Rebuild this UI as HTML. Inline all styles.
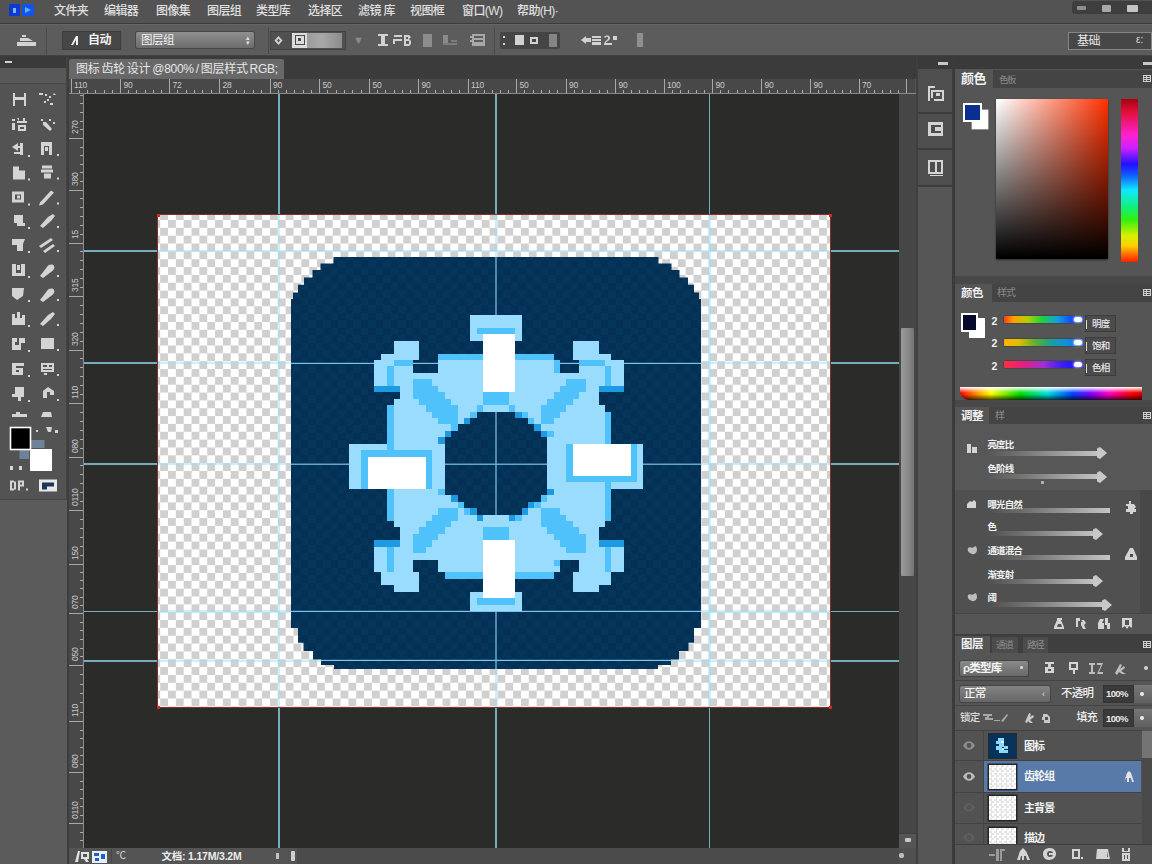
<!DOCTYPE html>
<html lang="zh">
<head>
<meta charset="utf-8">
<title>Photoshop</title>
<style>
html,body{margin:0;padding:0;}
body{width:1152px;height:864px;overflow:hidden;background:#545454;position:relative;
 font-family:"Liberation Sans","Noto Sans CJK SC",sans-serif;font-size:12px;color:#dcdcdc;}
.a{position:absolute;}
.t{position:absolute;white-space:nowrap;line-height:1;}
/* ---------- top bars ---------- */
#menubar{left:0;top:0;width:1152px;height:23px;background:#535353;border-bottom:1px solid #3c3c3c;}
#menubar .t{top:5px;font-size:12px;color:#e0e0e0;letter-spacing:-0.6px;font-weight:500;}
#optbar{left:0;top:24px;width:1152px;height:32px;background:#5c5c5c;border-top:1px solid #666;border-bottom:1px solid #424242;box-sizing:border-box;}
#strip{left:0;top:56px;width:1152px;height:23px;background:#3b3b3b;}
#tab{left:69px;top:59px;width:215px;height:20px;background:#686868;border-radius:2px 2px 0 0;}
#tab .t{left:7px;top:4px;font-size:12px;color:#e6e6e6;letter-spacing:-0.3px;word-spacing:-1px;}
/* ---------- toolbox ---------- */
#toolbox{left:0;top:57px;width:66px;height:443px;background:#535353;border-right:1px solid #444;}
#toolhead{left:0;top:57px;width:66px;height:11px;background:#3a3a3a;}
#toolbelow{left:0;top:499px;width:67px;height:365px;background:#5b5b5b;border-top:1px solid #474747;}
/* ---------- rulers / canvas ---------- */
#rulert{left:69px;top:79px;width:846px;height:15px;background:#484848;}
#rulerl{left:69px;top:94px;width:15px;height:754px;background:#484848;}
#canvas{left:84px;top:94px;width:815px;height:754px;background:#2b2b29;overflow:hidden;}
#vscroll{left:899px;top:94px;width:17px;height:754px;background:#464646;}
#vthumb{left:901px;top:328px;width:13px;height:248px;background:linear-gradient(90deg,#9a9a9a,#8a8a8a 50%,#747474);border-radius:1px;}
#status{left:69px;top:848px;width:847px;height:16px;background:#555;}
#doc{left:158px;top:215px;width:672px;height:492px;background-color:#fff;
 background-image:conic-gradient(#d0d0d0 25%,#fff 0 50%,#d0d0d0 0 75%,#fff 0);background-size:15.7px 15.7px;background-position:10px -2.85px;outline:1px solid #8a2e26;}
.gv{position:absolute;width:1.6px;background:#5cc0e2;top:94px;height:754px;}
.gh{position:absolute;height:1.6px;background:#5cc0e2;left:84px;width:815px;}
/* ---------- right side ---------- */
#rgap{left:916px;top:56px;width:236px;height:808px;background:#3f3f3f;}
#istrip{left:918px;top:69px;width:33px;height:795px;background:#535353;}
#rpanel{left:955px;top:69px;width:197px;height:795px;background:#555;}
.tabbar{position:absolute;left:955px;width:197px;height:18px;background:#444;}
.tabact{position:absolute;top:0;left:0;height:18px;background:#555;}
.rl{font-size:8.5px;color:#c8c8c8;letter-spacing:-0.2px;}
</style>
</head>
<body>
<!-- top bars -->
<div id="menubar" class="a">
 <span class="t" style="left:8.5px;top:3.5px;width:11.5px;height:12.5px;background:#0c3ad2;border-radius:1px"></span><span class="t" style="left:13px;top:8px;width:3px;height:5px;background:#7fb4ff"></span>
 <span class="t" style="left:22px;top:3.5px;width:12px;height:12.5px;background:#1552e8;border-radius:1px"></span><span class="t" style="left:25px;top:7px;border-left:6px solid #58b0ff;border-top:3px solid transparent;border-bottom:3px solid transparent"></span>
 <span class="t" style="left:54px">文件夹</span>
 <span class="t" style="left:104px">编辑器</span>
 <span class="t" style="left:156px">图像集</span>
 <span class="t" style="left:207px">图层组</span>
 <span class="t" style="left:256px">类型库</span>
 <span class="t" style="left:308px">选择区</span>
 <span class="t" style="left:358px">滤镜 库</span>
 <span class="t" style="left:410px">视图框</span>
 <span class="t" style="left:462px">窗口(W)</span>
 <span class="t" style="left:517px">帮助(H)·</span>
</div>
<div id="optbar" class="a"></div>
<div id="strip" class="a"></div>
<div id="tab" class="a"><span class="t">图标 齿轮 设计 @800% / 图层样式 RGB;</span></div>

<!-- toolbox -->
<div id="toolbox" class="a"></div>
<div id="toolhead" class="a"></div>
<div id="toolbelow" class="a"></div>
<!--TB-S--><svg class="a" style="left:0;top:57px" width="66" height="443" viewBox="0 0 66 443"><g fill="#d4d4d4"><path d="M13 36h2v4h9v-4h2v13h-2v-6h-9v6h-2z"/><path d="M39 36h4v2h-4zM45 37h2v2h-2zM49 39h2v2h-2zM47 42h2v2h-2zM44 44h2v2h-2zM50 46h3v2h-3zM54 36l2 2h-3z"/><path d="M12 62h3v2h-3zM12 66h3v7h-3zM17 61h2v3h4v-3h2v3h2v2h-10v-2h2zM18 68h8v6h-8zM20 70v2h4v-2z" fill-rule="evenodd"/><path d="M41 62h2v2h-2zM43 65l3 0 6 7-2 2-7-6zM49 62h2v2h-2zM53 65h2v2h-2z"/><path d="M12 90l6-4v3h3v2h-3v3zM20 86h3v12h-3zM14 95h6v2h-6z"/><path d="M41 85h11v13H41zM44 89v9h5v-9z" fill-rule="evenodd"/><rect x="45" y="90" width="3" height="4"/><rect x="28" y="98" width="2" height="2"/><rect x="57" y="97" width="2" height="2"/><path d="M13 109.5h6v4h6v9H13z"/><path d="M42 108.5h10v3h-10zM41 112.5h12v3h-12zM44 116.5h7v5h-7z"/><rect x="28" y="121.5" width="2" height="2"/><rect x="57" y="120.5" width="2" height="2"/><path d="M12 134.5h12v11H12zM15 137.5v5h6v-5z" fill-rule="evenodd"/><rect x="17" y="138.5" width="3" height="3"/><path d="M40 145.5l11-12 3 2-11 12-4 1z"/><rect x="28" y="146.5" width="2" height="2"/><rect x="57" y="145.5" width="2" height="2"/><path d="M14 158h9v8h2v3H17v-3h-3z"/><path d="M40 169l8-9 5-3 2 2-4 5-8 7z"/><rect x="28" y="170" width="2" height="2"/><rect x="57" y="169" width="2" height="2"/><path d="M12 182h13l-2 5v7h-6v-6h-5z"/><path d="M39 189l12-8 2 2-12 8zM43 194l10-7 2 2-10 7z"/><rect x="28" y="194" width="2" height="2"/><rect x="57" y="193" width="2" height="2"/><path d="M12 207h4v9h5v-9h4v12H12z"/><rect x="17" y="208" width="3" height="5"/><path d="M40 219l7-9c2-3 6-3 7-1s0 4-3 6l-8 6z"/><rect x="28" y="219" width="2" height="2"/><rect x="57" y="218" width="2" height="2"/><path d="M12 231h12l-1 8-6 4-5-4z"/><path d="M40 243l7-9c2-3 6-3 7-1s0 4-3 6l-8 6z"/><rect x="28" y="243" width="2" height="2"/><rect x="57" y="242" width="2" height="2"/><path d="M12 257h3v4h2v-6h3v6h2v-3h3v10H12z"/><path d="M40 267l8-9 5-3 2 2-4 5-8 7z"/><rect x="28" y="268" width="2" height="2"/><rect x="57" y="267" width="2" height="2"/><path d="M12 281h5v4h-2v3h4v-7h6v5h-4v7H12z"/><path d="M41 281h13v11H41z"/><rect x="28" y="293" width="2" height="2"/><rect x="57" y="292" width="2" height="2"/><path d="M12 306h12v3h-8v2h7v7H12zM16 313v2h3v-2z" fill-rule="evenodd"/><path d="M41 306h13v9H41zM43 308v2h4v-2zM49 308v2h3v-2zM43 312v1h9v-1z" fill-rule="evenodd"/><path d="M44 316h3v2h-3z"/><rect x="28" y="318" width="2" height="2"/><rect x="57" y="317" width="2" height="2"/><path d="M15 330h9v10h-3v4h-3v-4h-6v-3h3z"/><path d="M43 334l5-4 6 4v4h-4v-3h-3v6h-4z"/><rect x="28" y="343" width="2" height="2"/><rect x="57" y="342" width="2" height="2"/><path d="M12 357h4v-2h4v2h7v3H12zM41 360l2-5h8l1 5z"/><path d="M46 370h6l-1 5h-3zM55 373h3v3h-3zM36 373h2v2h-2z"/><rect x="10" y="409" width="3" height="4"/><rect x="19" y="409" width="3" height="4"/></g><rect x="19.500" y="383" width="25" height="19" fill="#6e8298"/><rect x="29.500" y="391.5" width="23" height="23" fill="#fff" stroke="#555" stroke-width="1"/><rect x="10.500" y="370.5" width="20" height="22" fill="#000" stroke="#fff" stroke-width="1.6"/><g fill="#d4d4d4"><path d="M10 423.5h4v1h2v8h-2v1h-4zM12 425.5v6h2v-6zM18 423.5h6v6h-4v4h-2zM20 425.5v2h2v-2z" fill-rule="evenodd"/><rect x="26" y="431.5" width="2" height="2"/></g><rect x="39" y="422.5" width="18" height="12" fill="#e8e8e8"/><path d="M42 425.5h12v4h-7v3h-5z" fill="#1c3558"/></svg><!--TB-E-->

<!--OPT-S--><div class="a" style="left:1072px;top:1px;width:80px;height:13px;background:#3e3e3e;border-radius:3px 0 0 3px"></div>
<div class="a" style="left:1077px;top:6px;width:9px;height:4px;background:#8d8d8d;border-radius:1px"></div>
<div class="a" style="left:1102px;top:5px;width:9px;height:7px;background:#a8a8a8;border-radius:1px"></div>
<div class="a" style="left:1127px;top:5px;width:11px;height:7px;background:#c4c4c4;border-radius:1px"></div>
<svg class="a" style="left:16px;top:33px" width="22" height="14" viewBox="0 0 22 14"><path d="M1 9h19v4H1zM4 5h8l5 3H4zM6 2h4v2H6z" fill="#d2d2d2"/></svg>
<div class="a" style="left:46px;top:27px;width:1px;height:27px;background:#4a4a4a"></div>
<div class="a" style="left:62px;top:31px;width:59px;height:19px;background:#474747;border:1px solid #3c3c3c;box-sizing:border-box"></div>
<svg class="a" style="left:70px;top:35px" width="10" height="11" viewBox="0 0 10 11"><path d="M1 10L6 1h2v9H6V5L3 10z" fill="#eee"/></svg>
<span class="t" style="left:88px;top:34px;font-size:12px;color:#f0f0f0;font-weight:bold;letter-spacing:-0.5px">自动</span>
<div class="a" style="left:136px;top:32px;width:118px;height:16px;background:linear-gradient(#8f8f8f,#6c6c6c);border-radius:2px;box-shadow:0 0 0 1px #474747"></div>
<span class="t" style="left:141px;top:35px;font-size:11.5px;color:#f2f2f2;letter-spacing:-0.5px">图层组</span>
<span class="t" style="left:246px;top:35px;font-size:7px;color:#e0e0e0;line-height:5px">▴<br>▾</span>
<div class="a" style="left:268px;top:27px;width:1px;height:27px;background:#4a4a4a"></div>
<div class="a" style="left:270px;top:31px;width:76px;height:19px;background:#505050;border:1px solid #424242;box-sizing:border-box"></div>
<svg class="a" style="left:273px;top:35px" width="11" height="11" viewBox="0 0 11 11"><path d="M5.5 1l4 4.500-4 4.500-4-4.500zM4 5.500l1.500 1.800L7 5.500 5.500 3.700z" fill="#d2d2d2" fill-rule="evenodd"/></svg>
<div class="a" style="left:292px;top:33px;width:50px;height:15px;background:linear-gradient(90deg,#dcdcdc 0,#dcdcdc 30%,#9d9d9d 31%,#a8a8a8 60%,#8c8c8c 100%)"></div>
<div class="a" style="left:295px;top:35px;width:10px;height:10px;border:1.5px solid #4a4a4a;box-sizing:border-box"><div style="margin:2px;width:3px;height:3px;background:#4a4a4a"></div></div>
<span class="t" style="left:353px;top:35px;font-size:11px;color:#8a8a8a">▼</span>
<svg class="a" style="left:377px;top:33px" width="110" height="15" viewBox="0 0 110 15"><g fill="#d2d2d2"><path d="M1 1h10v2H8v8h3v2H1v-2h3V3H1z"/><path d="M17 2h8v2h-8zM16 6h9v2h-7v3h-2zM27 2h5l2 2-2 2 2 2v3l-2 2h-5zM29 4v2h2V4zM29 8v3h3V8z" fill-rule="evenodd"/><rect x="46" y="1" width="9" height="13" fill="#8c8c8c"/><path d="M66 2h5v8h-5z" fill="#8a8a8a"/><path d="M66 10h14v2H66zM74 7h6v2h-6z" fill="#7c7c7c"/><path d="M95 1h13v12H95zM93 3h2v2h-2zM93 7h2v2h-2z" fill="#a8a8a8"/><path d="M97 3h9v2h-9zM97 7h9v2h-9z" fill="#5b5b5b"/></g></svg>
<div class="a" style="left:494px;top:27px;width:1px;height:27px;background:#4a4a4a"></div>
<div class="a" style="left:500px;top:32px;width:60px;height:17px;background:#454545;border-radius:2px"></div>
<svg class="a" style="left:500px;top:32px" width="60" height="17" viewBox="0 0 60 17"><g fill="#d2d2d2"><rect x="3" y="4" width="2" height="2"/><rect x="3" y="11" width="2" height="2"/><rect x="15" y="3" width="9" height="10"/><path d="M30 5h8v7h-8zM32 7v3h4V7z" fill-rule="evenodd"/><rect x="49" y="2" width="8" height="13" fill="#858585"/></g></svg>
<svg class="a" style="left:580px;top:33px" width="40" height="15" viewBox="0 0 40 15"><g fill="#d2d2d2"><path d="M1 7l5-4v2h5v4H6v2z"/><path d="M12 3h9v2h-9zM12 6h9v2h-9zM12 9h9v3h-9z"/><path d="M24 4c2-2 6-2 6 1s-4 3-4 5h6v2h-8c0-4 4-5 4-7s-2-1-3 0zM33 3h4v4h-4z"/></g></svg>
<div class="a" style="left:637px;top:33px;width:6px;height:14px;background:#8f8f8f"></div>
<div class="a" style="left:1068px;top:32px;width:84px;height:18px;background:#474747;border:1px solid #858585;box-sizing:border-box"></div>
<span class="t" style="left:1077px;top:35px;font-size:12px;color:#e6e6e6;letter-spacing:-0.5px">基础</span>
<span class="t" style="left:1136px;top:35px;font-size:10px;color:#ddd">ε:</span>
<div class="a" style="left:938px;top:62px;width:10px;height:3px;background:#c8c8c8;z-index:5"></div>
<div class="a" style="left:1143px;top:62px;width:9px;height:3px;background:#c8c8c8;z-index:5"></div>
<div class="a" style="left:5px;top:61px;width:7px;height:2px;background:#d0d0d0"></div>
<div class="a" style="left:0;top:68px;width:66px;height:15px;background:#585858;border-bottom:1px solid #474747"></div>
<div class="a" style="left:67px;top:57px;width:2px;height:807px;background:#3d3d3d"></div><!--OPT-E-->
<!-- canvas -->
<div id="rulert" class="a"></div>
<div id="rulerl" class="a"></div>
<!--RUL-S--><svg class="a" style="left:69px;top:79px" width="847" height="15" viewBox="0 0 847 15" shape-rendering="crispEdges"><rect x="1.5" y="0" width="1" height="15" fill="#a8a8a8"/><rect x="51.0" y="0" width="1" height="15" fill="#a8a8a8"/><rect x="100.0" y="0" width="1" height="15" fill="#a8a8a8"/><rect x="150.0" y="0" width="1" height="15" fill="#a8a8a8"/><rect x="200.5" y="0" width="1" height="15" fill="#a8a8a8"/><rect x="250.0" y="0" width="1" height="15" fill="#a8a8a8"/><rect x="300.0" y="0" width="1" height="15" fill="#a8a8a8"/><rect x="349.0" y="0" width="1" height="15" fill="#a8a8a8"/><rect x="398.5" y="0" width="1" height="15" fill="#a8a8a8"/><rect x="447.0" y="0" width="1" height="15" fill="#a8a8a8"/><rect x="496.5" y="0" width="1" height="15" fill="#a8a8a8"/><rect x="546.0" y="0" width="1" height="15" fill="#a8a8a8"/><rect x="594.5" y="0" width="1" height="15" fill="#a8a8a8"/><rect x="643.0" y="0" width="1" height="15" fill="#a8a8a8"/><rect x="692.0" y="0" width="1" height="15" fill="#a8a8a8"/><rect x="741.0" y="0" width="1" height="15" fill="#a8a8a8"/><rect x="789.5" y="0" width="1" height="15" fill="#a8a8a8"/><rect x="837.0" y="0" width="1" height="15" fill="#a8a8a8"/><path d="M9.8 11h1v4h-1zM18.0 11h1v4h-1zM26.2 11h1v4h-1zM34.5 11h1v4h-1zM42.8 11h1v4h-1zM59.2 11h1v4h-1zM67.3 11h1v4h-1zM75.5 11h1v4h-1zM83.7 11h1v4h-1zM91.8 11h1v4h-1zM108.3 11h1v4h-1zM116.7 11h1v4h-1zM125.0 11h1v4h-1zM133.3 11h1v4h-1zM141.7 11h1v4h-1zM158.4 11h1v4h-1zM166.8 11h1v4h-1zM175.2 11h1v4h-1zM183.7 11h1v4h-1zM192.1 11h1v4h-1zM208.8 11h1v4h-1zM217.0 11h1v4h-1zM225.2 11h1v4h-1zM233.5 11h1v4h-1zM241.8 11h1v4h-1zM258.3 11h1v4h-1zM266.7 11h1v4h-1zM275.0 11h1v4h-1zM283.3 11h1v4h-1zM291.7 11h1v4h-1zM308.2 11h1v4h-1zM316.3 11h1v4h-1zM324.5 11h1v4h-1zM332.7 11h1v4h-1zM340.8 11h1v4h-1zM357.2 11h1v4h-1zM365.5 11h1v4h-1zM373.8 11h1v4h-1zM382.0 11h1v4h-1zM390.2 11h1v4h-1zM406.6 11h1v4h-1zM414.7 11h1v4h-1zM422.8 11h1v4h-1zM430.8 11h1v4h-1zM438.9 11h1v4h-1zM455.2 11h1v4h-1zM463.5 11h1v4h-1zM471.8 11h1v4h-1zM480.0 11h1v4h-1zM488.2 11h1v4h-1zM504.8 11h1v4h-1zM513.0 11h1v4h-1zM521.2 11h1v4h-1zM529.5 11h1v4h-1zM537.8 11h1v4h-1zM554.1 11h1v4h-1zM562.2 11h1v4h-1zM570.2 11h1v4h-1zM578.3 11h1v4h-1zM586.4 11h1v4h-1zM602.6 11h1v4h-1zM610.7 11h1v4h-1zM618.8 11h1v4h-1zM626.8 11h1v4h-1zM634.9 11h1v4h-1zM651.2 11h1v4h-1zM659.3 11h1v4h-1zM667.5 11h1v4h-1zM675.7 11h1v4h-1zM683.8 11h1v4h-1zM700.2 11h1v4h-1zM708.3 11h1v4h-1zM716.5 11h1v4h-1zM724.7 11h1v4h-1zM732.8 11h1v4h-1zM749.1 11h1v4h-1zM757.2 11h1v4h-1zM765.2 11h1v4h-1zM773.3 11h1v4h-1zM781.4 11h1v4h-1zM797.4 11h1v4h-1zM805.3 11h1v4h-1zM813.2 11h1v4h-1zM821.2 11h1v4h-1zM829.1 11h1v4h-1z" fill="#a8a8a8"/><rect x="0" y="14" width="847" height="1" fill="#8a8a8a"/></svg>
<span class="t rl" style="left:74.0px;top:81px">110</span><span class="t rl" style="left:123.5px;top:81px">90</span><span class="t rl" style="left:172.5px;top:81px">72</span><span class="t rl" style="left:222.5px;top:81px">28</span><span class="t rl" style="left:273.0px;top:81px">90</span><span class="t rl" style="left:322.5px;top:81px">50</span><span class="t rl" style="left:372.5px;top:81px">50</span><span class="t rl" style="left:421.5px;top:81px">90</span><span class="t rl" style="left:471.0px;top:81px">110</span><span class="t rl" style="left:519.5px;top:81px">50</span><span class="t rl" style="left:569.0px;top:81px">90</span><span class="t rl" style="left:618.5px;top:81px">90</span><span class="t rl" style="left:667.0px;top:81px">100</span><span class="t rl" style="left:715.5px;top:81px">90</span><span class="t rl" style="left:764.5px;top:81px">90</span><span class="t rl" style="left:813.5px;top:81px">90</span><span class="t rl" style="left:862.0px;top:81px">70</span>
<svg class="a" style="left:69px;top:94px" width="15" height="754" viewBox="0 0 15 754" shape-rendering="crispEdges"><rect x="0" y="44.0" width="15" height="1" fill="#a8a8a8"/><rect x="0" y="95.5" width="15" height="1" fill="#a8a8a8"/><rect x="0" y="148.5" width="15" height="1" fill="#a8a8a8"/><rect x="0" y="202.0" width="15" height="1" fill="#a8a8a8"/><rect x="0" y="255.5" width="15" height="1" fill="#a8a8a8"/><rect x="0" y="309.0" width="15" height="1" fill="#a8a8a8"/><rect x="0" y="362.5" width="15" height="1" fill="#a8a8a8"/><rect x="0" y="416.0" width="15" height="1" fill="#a8a8a8"/><rect x="0" y="469.5" width="15" height="1" fill="#a8a8a8"/><rect x="0" y="519.0" width="15" height="1" fill="#a8a8a8"/><rect x="0" y="571.0" width="15" height="1" fill="#a8a8a8"/><rect x="0" y="627.0" width="15" height="1" fill="#a8a8a8"/><rect x="0" y="678.0" width="15" height="1" fill="#a8a8a8"/><rect x="0" y="729.0" width="15" height="1" fill="#a8a8a8"/><path d="M11 0.7h4v1h-4zM11 9.3h4v1h-4zM11 18.0h4v1h-4zM11 26.7h4v1h-4zM11 35.3h4v1h-4zM11 52.6h4v1h-4zM11 61.2h4v1h-4zM11 69.8h4v1h-4zM11 78.3h4v1h-4zM11 86.9h4v1h-4zM11 104.3h4v1h-4zM11 113.2h4v1h-4zM11 122.0h4v1h-4zM11 130.8h4v1h-4zM11 139.7h4v1h-4zM11 157.4h4v1h-4zM11 166.3h4v1h-4zM11 175.2h4v1h-4zM11 184.2h4v1h-4zM11 193.1h4v1h-4zM11 210.9h4v1h-4zM11 219.8h4v1h-4zM11 228.8h4v1h-4zM11 237.7h4v1h-4zM11 246.6h4v1h-4zM11 264.4h4v1h-4zM11 273.3h4v1h-4zM11 282.2h4v1h-4zM11 291.2h4v1h-4zM11 300.1h4v1h-4zM11 317.9h4v1h-4zM11 326.8h4v1h-4zM11 335.8h4v1h-4zM11 344.7h4v1h-4zM11 353.6h4v1h-4zM11 371.4h4v1h-4zM11 380.3h4v1h-4zM11 389.2h4v1h-4zM11 398.2h4v1h-4zM11 407.1h4v1h-4zM11 424.9h4v1h-4zM11 433.8h4v1h-4zM11 442.8h4v1h-4zM11 451.7h4v1h-4zM11 460.6h4v1h-4zM11 477.8h4v1h-4zM11 486.0h4v1h-4zM11 494.2h4v1h-4zM11 502.5h4v1h-4zM11 510.8h4v1h-4zM11 527.7h4v1h-4zM11 536.3h4v1h-4zM11 545.0h4v1h-4zM11 553.7h4v1h-4zM11 562.3h4v1h-4zM11 580.3h4v1h-4zM11 589.7h4v1h-4zM11 599.0h4v1h-4zM11 608.3h4v1h-4zM11 617.7h4v1h-4zM11 635.5h4v1h-4zM11 644.0h4v1h-4zM11 652.5h4v1h-4zM11 661.0h4v1h-4zM11 669.5h4v1h-4zM11 686.5h4v1h-4zM11 695.0h4v1h-4zM11 703.5h4v1h-4zM11 712.0h4v1h-4zM11 720.5h4v1h-4zM11 737.7h4v1h-4zM11 746.3h4v1h-4z" fill="#a8a8a8"/><rect x="14" y="0" width="1" height="754" fill="#8a8a8a"/></svg>
<span class="t rl" style="left:71px;top:134.0px;transform-origin:0 0;transform:rotate(-90deg)">270</span><span class="t rl" style="left:71px;top:185.5px;transform-origin:0 0;transform:rotate(-90deg)">380</span><span class="t rl" style="left:71px;top:238.5px;transform-origin:0 0;transform:rotate(-90deg)">15</span><span class="t rl" style="left:71px;top:292.0px;transform-origin:0 0;transform:rotate(-90deg)">315</span><span class="t rl" style="left:71px;top:345.5px;transform-origin:0 0;transform:rotate(-90deg)">320</span><span class="t rl" style="left:71px;top:399.0px;transform-origin:0 0;transform:rotate(-90deg)">110</span><span class="t rl" style="left:71px;top:452.5px;transform-origin:0 0;transform:rotate(-90deg)">080</span><span class="t rl" style="left:71px;top:506.0px;transform-origin:0 0;transform:rotate(-90deg)">0110</span><span class="t rl" style="left:71px;top:559.5px;transform-origin:0 0;transform:rotate(-90deg)">150</span><span class="t rl" style="left:71px;top:609.0px;transform-origin:0 0;transform:rotate(-90deg)">070</span><span class="t rl" style="left:71px;top:661.0px;transform-origin:0 0;transform:rotate(-90deg)">050</span><span class="t rl" style="left:71px;top:717.0px;transform-origin:0 0;transform:rotate(-90deg)">110</span><span class="t rl" style="left:71px;top:768.0px;transform-origin:0 0;transform:rotate(-90deg)">080</span><span class="t rl" style="left:71px;top:819.0px;transform-origin:0 0;transform:rotate(-90deg)">0110</span><!--RUL-E-->
<div id="canvas" class="a"></div>
<div class="a" style="left:84px;top:94px;width:815px;height:754px;overflow:hidden"><i style="position:absolute;left:194.1px;top:0;width:1.8px;height:754px;background:#74aebb"></i><i style="position:absolute;left:411.1px;top:0;width:1.8px;height:754px;background:#74aebb"></i><i style="position:absolute;left:624.6px;top:0;width:1.8px;height:754px;background:#74aebb"></i><i style="position:absolute;top:156.2px;left:0;height:1.8px;width:815px;background:#74aebb"></i><i style="position:absolute;top:268.3px;left:0;height:1.8px;width:815px;background:#74aebb"></i><i style="position:absolute;top:369.1px;left:0;height:1.8px;width:815px;background:#74aebb"></i><i style="position:absolute;top:516.5px;left:0;height:1.8px;width:815px;background:#74aebb"></i><i style="position:absolute;top:565.9px;left:0;height:1.8px;width:815px;background:#74aebb"></i></div>
<div id="doc" class="a"></div>
<div class="a" style="left:158px;top:215px;width:672px;height:492px;overflow:hidden"><i style="position:absolute;left:119.7px;top:0;width:2.6px;height:492px;background:rgba(150,225,248,0.5)"></i><i style="position:absolute;left:336.7px;top:0;width:2.6px;height:492px;background:rgba(150,225,248,0.5)"></i><i style="position:absolute;left:550.2px;top:0;width:2.6px;height:492px;background:rgba(150,225,248,0.5)"></i><i style="position:absolute;top:34.8px;left:0;height:2.6px;width:672px;background:rgba(150,225,248,0.5)"></i><i style="position:absolute;top:146.9px;left:0;height:2.6px;width:672px;background:rgba(150,225,248,0.5)"></i><i style="position:absolute;top:247.7px;left:0;height:2.6px;width:672px;background:rgba(150,225,248,0.5)"></i><i style="position:absolute;top:395.1px;left:0;height:2.6px;width:672px;background:rgba(150,225,248,0.5)"></i><i style="position:absolute;top:444.5px;left:0;height:2.6px;width:672px;background:rgba(150,225,248,0.5)"></i></div>
<div class="a" style="left:156.5px;top:213.5px;width:3px;height:3px;background:#d42a22"></div><div class="a" style="left:828.5px;top:213.5px;width:3px;height:3px;background:#d42a22"></div><div class="a" style="left:156.5px;top:705.5px;width:3px;height:3px;background:#d42a22"></div><div class="a" style="left:828.5px;top:705.5px;width:3px;height:3px;background:#d42a22"></div>
<!--ICON-S--><svg class="a" style="left:291px;top:257px" width="410" height="412" viewBox="0 0 410 412" shape-rendering="crispEdges"><defs><pattern id="nv" width="15" height="15" patternUnits="userSpaceOnUse" x="2" y="3"><rect width="15" height="15" fill="#033054"/><rect width="7.5" height="7.5" fill="#05355b"/><rect x="7.5" y="7.5" width="7.5" height="7.5" fill="#05355b"/></pattern><clipPath id="rr"><path id="rrp" d="M42.5 0h325v6.45h-325zM29.5 6.4h351v6.65h-351zM21.5 13h367v7.45h-367zM13 20.4h384v7.45h-384zM7 27.8h396v7.65h-396zM2 35.4h406v6.65h-406zM0 42h410v329.05h-410zM43 408h324v4.05h-324zM30 402.4h350v5.65h-350zM22 394h366v8.45h-366zM12.5 385.8h385v8.25h-385zM7 371h396v14.85h-396z"/></clipPath></defs><g clip-path="url(#rr)"><rect width="410" height="412" fill="url(#nv)"/></g><g clip-path="url(#rr)" fill="#7cc4e8" shape-rendering="auto"><rect x="204.4" y="0" width="1.2" height="412"/><rect y="105.8" x="0" height="1.2" width="410"/><rect y="206.6" x="0" height="1.2" width="410"/><rect y="353.8" x="0" height="1.2" width="410"/><rect y="402.8" x="0" height="1.2" width="410"/></g><path fill="#9adcfd" d="M179.38 57.94h51.25v6.49h-51.25zM179.38 64.38h51.25v6.49h-51.25zM179.38 70.81h6.41v6.49h-6.41zM224.22 70.81h6.41v6.49h-6.41zM179.38 77.25h12.81v6.49h-12.81zM224.22 77.25h6.41v6.49h-6.41zM102.5 83.69h25.62v6.49h-25.62zM281.88 83.69h25.62v6.49h-25.62zM102.5 90.12h25.62v6.49h-25.62zM281.88 90.12h25.62v6.49h-25.62zM89.69 96.56h38.44v6.49h-38.44zM281.88 96.56h38.44v6.49h-38.44zM83.28 103h19.22v6.49h-19.22zM147.34 103h44.84v6.49h-44.84zM224.22 103h38.44v6.49h-38.44zM313.91 103h19.22v6.49h-19.22zM83.28 109.44h12.81v6.49h-12.81zM102.5 109.44h19.22v6.49h-19.22zM147.34 109.44h44.84v6.49h-44.84zM224.22 109.44h38.44v6.49h-38.44zM288.28 109.44h25.62v6.49h-25.62zM320.31 109.44h12.81v6.49h-12.81zM83.28 115.88h12.81v6.49h-12.81zM102.5 115.88h89.69v6.49h-89.69zM224.22 115.88h89.69v6.49h-89.69zM320.31 115.88h12.81v6.49h-12.81zM83.28 122.31h12.81v6.49h-12.81zM102.5 122.31h19.22v6.49h-19.22zM140.94 122.31h51.25v6.49h-51.25zM224.22 122.31h51.25v6.49h-51.25zM294.69 122.31h19.22v6.49h-19.22zM320.31 122.31h12.81v6.49h-12.81zM108.91 128.75h12.81v6.49h-12.81zM147.34 128.75h44.84v6.49h-44.84zM224.22 128.75h44.84v6.49h-44.84zM294.69 128.75h12.81v6.49h-12.81zM108.91 135.19h12.81v6.49h-12.81zM153.75 135.19h38.44v6.49h-38.44zM217.81 135.19h44.84v6.49h-44.84zM288.28 135.19h19.22v6.49h-19.22zM102.5 141.62h25.62v6.49h-25.62zM160.16 141.62h32.03v6.49h-32.03zM217.81 141.62h38.44v6.49h-38.44zM281.88 141.62h25.62v6.49h-25.62zM102.5 148.06h32.03v6.49h-32.03zM166.56 148.06h19.22v6.49h-19.22zM192.19 148.06h25.62v6.49h-25.62zM224.22 148.06h25.62v6.49h-25.62zM275.47 148.06h38.44v6.49h-38.44zM102.5 154.5h38.44v6.49h-38.44zM166.56 154.5h12.81v6.49h-12.81zM237.03 154.5h12.81v6.49h-12.81zM269.06 154.5h44.84v6.49h-44.84zM102.5 160.94h44.84v6.49h-44.84zM166.56 160.94h6.41v6.49h-6.41zM243.44 160.94h6.41v6.49h-6.41zM262.66 160.94h51.25v6.49h-51.25zM102.5 167.38h57.66v6.49h-57.66zM249.84 167.38h64.06v6.49h-64.06zM102.5 173.81h51.25v6.49h-51.25zM262.66 173.81h51.25v6.49h-51.25zM102.5 180.25h44.84v6.49h-44.84zM256.25 180.25h57.66v6.49h-57.66zM57.66 186.69h38.44v6.49h-38.44zM102.5 186.69h51.25v6.49h-51.25zM256.25 186.69h19.22v6.49h-19.22zM345.94 186.69h6.41v6.49h-6.41zM57.66 193.12h12.81v6.49h-12.81zM140.94 193.12h12.81v6.49h-12.81zM256.25 193.12h19.22v6.49h-19.22zM345.94 193.12h6.41v6.49h-6.41zM57.66 199.56h12.81v6.49h-12.81zM140.94 199.56h12.81v6.49h-12.81zM256.25 199.56h19.22v6.49h-19.22zM345.94 199.56h6.41v6.49h-6.41zM57.66 206h12.81v6.49h-12.81zM140.94 206h12.81v6.49h-12.81zM256.25 206h19.22v6.49h-19.22zM345.94 206h6.41v6.49h-6.41zM57.66 212.44h12.81v6.49h-12.81zM140.94 212.44h12.81v6.49h-12.81zM256.25 212.44h19.22v6.49h-19.22zM345.94 212.44h6.41v6.49h-6.41zM57.66 218.88h12.81v6.49h-12.81zM140.94 218.88h12.81v6.49h-12.81zM256.25 218.88h19.22v6.49h-19.22zM345.94 218.88h6.41v6.49h-6.41zM57.66 225.31h12.81v6.49h-12.81zM140.94 225.31h12.81v6.49h-12.81zM256.25 225.31h57.66v6.49h-57.66zM320.31 225.31h32.03v6.49h-32.03zM102.5 231.75h44.84v6.49h-44.84zM262.66 231.75h51.25v6.49h-51.25zM102.5 238.19h57.66v6.49h-57.66zM256.25 238.19h57.66v6.49h-57.66zM102.5 244.62h64.06v6.49h-64.06zM249.84 244.62h64.06v6.49h-64.06zM102.5 251.06h44.84v6.49h-44.84zM166.56 251.06h6.41v6.49h-6.41zM237.03 251.06h12.81v6.49h-12.81zM269.06 251.06h44.84v6.49h-44.84zM102.5 257.5h38.44v6.49h-38.44zM166.56 257.5h19.22v6.49h-19.22zM192.19 257.5h25.62v6.49h-25.62zM230.62 257.5h19.22v6.49h-19.22zM275.47 257.5h38.44v6.49h-38.44zM102.5 263.94h32.03v6.49h-32.03zM160.16 263.94h89.69v6.49h-89.69zM281.88 263.94h32.03v6.49h-32.03zM108.91 270.38h19.22v6.49h-19.22zM153.75 270.38h38.44v6.49h-38.44zM217.81 270.38h38.44v6.49h-38.44zM288.28 270.38h19.22v6.49h-19.22zM108.91 276.81h12.81v6.49h-12.81zM147.34 276.81h44.84v6.49h-44.84zM217.81 276.81h44.84v6.49h-44.84zM294.69 276.81h12.81v6.49h-12.81zM108.91 283.25h12.81v6.49h-12.81zM140.94 283.25h51.25v6.49h-51.25zM224.22 283.25h44.84v6.49h-44.84zM294.69 283.25h12.81v6.49h-12.81zM83.28 289.69h12.81v6.49h-12.81zM102.5 289.69h19.22v6.49h-19.22zM134.53 289.69h57.66v6.49h-57.66zM224.22 289.69h51.25v6.49h-51.25zM294.69 289.69h19.22v6.49h-19.22zM320.31 289.69h12.81v6.49h-12.81zM83.28 296.12h12.81v6.49h-12.81zM102.5 296.12h89.69v6.49h-89.69zM224.22 296.12h89.69v6.49h-89.69zM320.31 296.12h12.81v6.49h-12.81zM83.28 302.56h12.81v6.49h-12.81zM102.5 302.56h19.22v6.49h-19.22zM147.34 302.56h44.84v6.49h-44.84zM224.22 302.56h38.44v6.49h-38.44zM288.28 302.56h25.62v6.49h-25.62zM320.31 302.56h12.81v6.49h-12.81zM83.28 309h12.81v6.49h-12.81zM102.5 309h19.22v6.49h-19.22zM147.34 309h44.84v6.49h-44.84zM224.22 309h44.84v6.49h-44.84zM288.28 309h25.62v6.49h-25.62zM320.31 309h12.81v6.49h-12.81zM89.69 315.44h38.44v6.49h-38.44zM281.88 315.44h38.44v6.49h-38.44zM89.69 321.88h38.44v6.49h-38.44zM281.88 321.88h38.44v6.49h-38.44zM102.5 328.31h25.62v6.49h-25.62zM281.88 328.31h25.62v6.49h-25.62zM179.38 334.75h12.81v6.49h-12.81zM224.22 334.75h6.41v6.49h-6.41zM179.38 341.19h6.41v6.49h-6.41zM224.22 341.19h6.41v6.49h-6.41zM179.38 347.62h51.25v6.49h-51.25z"/><path fill="#50c2fb" d="M185.78 70.81h38.44v6.49h-38.44zM147.34 96.56h44.84v6.49h-44.84zM224.22 96.56h38.44v6.49h-38.44zM102.5 103h19.22v6.49h-19.22zM262.66 103h6.41v6.49h-6.41zM288.28 103h25.62v6.49h-25.62zM96.09 109.44h6.41v6.49h-6.41zM262.66 109.44h6.41v6.49h-6.41zM313.91 109.44h6.41v6.49h-6.41zM96.09 115.88h6.41v6.49h-6.41zM313.91 115.88h6.41v6.49h-6.41zM96.09 122.31h6.41v6.49h-6.41zM121.72 122.31h19.22v6.49h-19.22zM275.47 122.31h19.22v6.49h-19.22zM313.91 122.31h6.41v6.49h-6.41zM121.72 128.75h25.62v6.49h-25.62zM269.06 128.75h25.62v6.49h-25.62zM121.72 135.19h32.03v6.49h-32.03zM192.19 135.19h25.62v6.49h-25.62zM262.66 135.19h25.62v6.49h-25.62zM128.12 141.62h32.03v6.49h-32.03zM192.19 141.62h25.62v6.49h-25.62zM256.25 141.62h25.62v6.49h-25.62zM96.09 148.06h6.41v6.49h-6.41zM134.53 148.06h32.03v6.49h-32.03zM185.78 148.06h6.41v6.49h-6.41zM217.81 148.06h6.41v6.49h-6.41zM249.84 148.06h25.62v6.49h-25.62zM96.09 154.5h6.41v6.49h-6.41zM140.94 154.5h25.62v6.49h-25.62zM179.38 154.5h6.41v6.49h-6.41zM230.62 154.5h6.41v6.49h-6.41zM249.84 154.5h19.22v6.49h-19.22zM313.91 154.5h6.41v6.49h-6.41zM96.09 160.94h6.41v6.49h-6.41zM147.34 160.94h19.22v6.49h-19.22zM237.03 160.94h6.41v6.49h-6.41zM249.84 160.94h12.81v6.49h-12.81zM313.91 160.94h6.41v6.49h-6.41zM96.09 167.38h6.41v6.49h-6.41zM160.16 167.38h6.41v6.49h-6.41zM313.91 167.38h6.41v6.49h-6.41zM96.09 173.81h6.41v6.49h-6.41zM256.25 173.81h6.41v6.49h-6.41zM313.91 173.81h6.41v6.49h-6.41zM96.09 180.25h6.41v6.49h-6.41zM313.91 180.25h6.41v6.49h-6.41zM96.09 186.69h6.41v6.49h-6.41zM275.47 186.69h6.41v6.49h-6.41zM339.53 186.69h6.41v6.49h-6.41zM70.47 193.12h70.47v6.49h-70.47zM275.47 193.12h6.41v6.49h-6.41zM339.53 193.12h6.41v6.49h-6.41zM70.47 199.56h6.41v6.49h-6.41zM134.53 199.56h6.41v6.49h-6.41zM275.47 199.56h6.41v6.49h-6.41zM339.53 199.56h6.41v6.49h-6.41zM70.47 206h6.41v6.49h-6.41zM134.53 206h6.41v6.49h-6.41zM275.47 206h6.41v6.49h-6.41zM339.53 206h6.41v6.49h-6.41zM70.47 212.44h6.41v6.49h-6.41zM134.53 212.44h6.41v6.49h-6.41zM275.47 212.44h6.41v6.49h-6.41zM339.53 212.44h6.41v6.49h-6.41zM70.47 218.88h6.41v6.49h-6.41zM134.53 218.88h6.41v6.49h-6.41zM275.47 218.88h70.47v6.49h-70.47zM70.47 225.31h6.41v6.49h-6.41zM134.53 225.31h6.41v6.49h-6.41zM313.91 225.31h6.41v6.49h-6.41zM96.09 231.75h6.41v6.49h-6.41zM147.34 231.75h6.41v6.49h-6.41zM313.91 231.75h6.41v6.49h-6.41zM96.09 238.19h6.41v6.49h-6.41zM249.84 238.19h6.41v6.49h-6.41zM313.91 238.19h6.41v6.49h-6.41zM96.09 244.62h6.41v6.49h-6.41zM166.56 244.62h6.41v6.49h-6.41zM243.44 244.62h6.41v6.49h-6.41zM313.91 244.62h6.41v6.49h-6.41zM96.09 251.06h6.41v6.49h-6.41zM147.34 251.06h19.22v6.49h-19.22zM172.97 251.06h6.41v6.49h-6.41zM249.84 251.06h19.22v6.49h-19.22zM313.91 251.06h6.41v6.49h-6.41zM96.09 257.5h6.41v6.49h-6.41zM140.94 257.5h25.62v6.49h-25.62zM224.22 257.5h6.41v6.49h-6.41zM249.84 257.5h25.62v6.49h-25.62zM313.91 257.5h6.41v6.49h-6.41zM134.53 263.94h25.62v6.49h-25.62zM249.84 263.94h32.03v6.49h-32.03zM128.12 270.38h25.62v6.49h-25.62zM192.19 270.38h25.62v6.49h-25.62zM256.25 270.38h32.03v6.49h-32.03zM121.72 276.81h25.62v6.49h-25.62zM192.19 276.81h25.62v6.49h-25.62zM262.66 276.81h32.03v6.49h-32.03zM121.72 283.25h19.22v6.49h-19.22zM269.06 283.25h25.62v6.49h-25.62zM96.09 289.69h6.41v6.49h-6.41zM121.72 289.69h12.81v6.49h-12.81zM275.47 289.69h19.22v6.49h-19.22zM313.91 289.69h6.41v6.49h-6.41zM96.09 296.12h6.41v6.49h-6.41zM313.91 296.12h6.41v6.49h-6.41zM96.09 302.56h6.41v6.49h-6.41zM262.66 302.56h6.41v6.49h-6.41zM313.91 302.56h6.41v6.49h-6.41zM96.09 309h6.41v6.49h-6.41zM313.91 309h6.41v6.49h-6.41zM153.75 315.44h38.44v6.49h-38.44zM224.22 315.44h38.44v6.49h-38.44zM185.78 341.19h38.44v6.49h-38.44z"/><path fill="#ffffff" d="M192.19 77.25h32.03v6.49h-32.03zM192.19 83.69h32.03v6.49h-32.03zM192.19 90.12h32.03v6.49h-32.03zM192.19 96.56h32.03v6.49h-32.03zM192.19 103h32.03v6.49h-32.03zM192.19 109.44h32.03v6.49h-32.03zM192.19 115.88h32.03v6.49h-32.03zM192.19 122.31h32.03v6.49h-32.03zM192.19 128.75h32.03v6.49h-32.03zM281.88 186.69h57.66v6.49h-57.66zM281.88 193.12h57.66v6.49h-57.66zM76.88 199.56h57.66v6.49h-57.66zM281.88 199.56h57.66v6.49h-57.66zM76.88 206h57.66v6.49h-57.66zM281.88 206h57.66v6.49h-57.66zM76.88 212.44h57.66v6.49h-57.66zM281.88 212.44h57.66v6.49h-57.66zM76.88 218.88h57.66v6.49h-57.66zM76.88 225.31h57.66v6.49h-57.66zM192.19 283.25h32.03v6.49h-32.03zM192.19 289.69h32.03v6.49h-32.03zM192.19 296.12h32.03v6.49h-32.03zM192.19 302.56h32.03v6.49h-32.03zM192.19 309h32.03v6.49h-32.03zM192.19 315.44h32.03v6.49h-32.03zM192.19 321.88h32.03v6.49h-32.03zM192.19 328.31h32.03v6.49h-32.03zM192.19 334.75h32.03v6.49h-32.03z"/><path fill="#1e9ae2" d="M83.28 128.75h25.62v6.49h-25.62zM307.5 128.75h25.62v6.49h-25.62zM224.22 154.5h6.41v6.49h-6.41zM172.97 160.94h6.41v6.49h-6.41zM243.44 167.38h6.41v6.49h-6.41zM153.75 173.81h6.41v6.49h-6.41zM249.84 173.81h6.41v6.49h-6.41zM147.34 180.25h6.41v6.49h-6.41zM256.25 231.75h6.41v6.49h-6.41zM160.16 238.19h6.41v6.49h-6.41zM237.03 244.62h6.41v6.49h-6.41zM179.38 251.06h6.41v6.49h-6.41zM230.62 251.06h6.41v6.49h-6.41zM185.78 257.5h6.41v6.49h-6.41zM217.81 257.5h6.41v6.49h-6.41zM83.28 283.25h25.62v6.49h-25.62zM307.5 283.25h25.62v6.49h-25.62z"/></svg><!--ICON-E-->
<div id="vscroll" class="a"></div>
<div id="vthumb" class="a"></div>
<div id="status" class="a"></div>
<!--ST-S--><div class="a" style="left:69px;top:848px;width:847px;height:16px;background:#4b4b4b;"></div>
<div class="a" style="left:69px;top:848px;width:228px;height:16px;background:#545454;"></div>
<svg class="a" style="left:73px;top:849px" width="40" height="15" viewBox="0 0 40 15"><g fill="#e2e2e2"><path d="M2 13l3-11h2L5 13zM8 3h8v7h-2l2 3h-3l-2-3H8zM10 5v3h4V5z" fill-rule="evenodd"/></g><rect x="19" y="2" width="15" height="12" fill="#e8eef8"/><path d="M21 4h5v3h-5zM28 5h4v5h-4zM22 9h4v3h-4z" fill="#1d5fd0"/></svg>
<div class="a" style="left:111px;top:849px;width:1px;height:14px;background:#454545;"></div>
<span class="t" style="left:116px;top:851px;font-size:10px;color:#d8d8d8;">℃</span>
<span class="t" style="left:161.5px;top:851px;font-size:10.5px;color:#ececec;font-weight:bold;letter-spacing:-0.2px">文档: 1.17M/3.2M</span>
<div class="a" style="left:276px;top:853px;width:3px;height:6px;background:#c4c4c4;"></div>
<div class="a" style="left:291px;top:851px;width:4px;height:10px;background:#d0d0d0;border-radius:1px"></div>
<div class="a" style="left:899px;top:833px;width:17px;height:15px;background:#555;border-top:1px solid #404040;box-sizing:border-box"></div>
<div class="a" style="left:905px;top:838px;width:6px;height:4px;background:#c8c8c8;border-radius:1px"></div>
<div class="a" style="left:899px;top:848px;width:17px;height:16px;background:#505050;"></div>
<div class="a" style="left:899px;top:853px;width:5px;height:5px;background:#bdbdbd;border-radius:2px"></div><!--ST-E-->

<!-- right -->
<div id="rgap" class="a"></div>
<div id="istrip" class="a"></div>
<div id="rpanel" class="a"></div>
<!--R1-S--><div class="a" style="left:918px;top:56px;width:34px;height:13px;background:#3a3a3a;"></div>
<div class="a" style="left:918px;top:69px;width:34px;height:116px;background:#4e4e4e;"></div>
<div class="a" style="left:918px;top:112px;width:34px;height:1.5px;background:#3c3c3c;"></div>
<div class="a" style="left:918px;top:148px;width:34px;height:1.5px;background:#3c3c3c;"></div>
<div class="a" style="left:918px;top:185px;width:34px;height:1.5px;background:#3c3c3c;"></div>
<div class="a" style="left:918px;top:186.5px;width:34px;height:678px;background:#565656;"></div>
<svg class="a" style="left:918px;top:69px" width="34" height="116" viewBox="0 0 34 116"><g fill="#d4d4d4"><path d="M10 17h7v2h-5v13h-2zM13 21h13v11H16v-2h8v-7h-9v6h-2zM18 24h4v3h-4z" fill-rule="evenodd"/><path d="M10 53h15v14H10zM13 56v8h10v-8z" fill-rule="evenodd"/><path d="M17 58h6v4h-6z"/><path d="M10 65h15v2H10z"/><path d="M10 91h15v14H10zM12 93v10h5V93zM19 93v10h4V93z" fill-rule="evenodd"/><path d="M12 106h13v1H12z"/></g></svg>
<div class="a" style="left:952px;top:56px;width:3px;height:808px;background:#3b3b3b;"></div>
<div class="a" style="left:955px;top:56px;width:197px;height:13px;background:#3a3a3a;"></div>
<div class="tabbar" style="top:70px;height:18px"><div class="tabact" style="left:0px;width:38px;height:18px;background:#555"></div><div class="tabact" style="left:38px;width:30px;height:18px;background:#444"></div></div><span class="t" style="left:961px;top:72px;font-size:13px;color:#f2f2f2;font-weight:700;letter-spacing:-0.5px">颜色</span><span class="t" style="left:999px;top:75px;font-size:9.5px;color:#8a8a8a;letter-spacing:-1.5px">色板</span><svg class="a" style="left:1143px;top:75px" width="8" height="8" viewBox="0 0 8 8"><path d="M0 0h8v7H0zM1 1v1h2V1zM4 1v1h3V1zM1 3v1h2V3zM4 3v1h3V3zM1 5v1h2V5zM4 5v1h3V5z" fill="#cfcfcf" fill-rule="evenodd"/></svg>
<div class="a" style="left:955px;top:88px;width:197px;height:188px;background:#555;"></div>
<div class="a" style="left:996px;top:99px;width:111.5px;height:160px;background:#000;background:linear-gradient(to top,#000 1%,rgba(0,0,0,0) 100%),linear-gradient(to right,#fff 2%,#ff3000 100%);box-shadow:0 1px 2px rgba(0,0,0,.5)"></div>
<div class="a" style="left:1121px;top:99px;width:17px;height:163px;background:#f00;background:linear-gradient(to bottom,#a80010 0%,#e0103a 8%,#ff20d0 22%,#d020ff 30%,#2010ff 40%,#1060ff 47%,#10e8ff 56%,#10f080 66%,#30f010 74%,#d8f000 84%,#ffd000 90%,#ff6000 96%,#ff2000 100%)"></div>
<div class="a" style="left:972px;top:110px;width:16px;height:19px;background:#fff;box-shadow:0 0 0 0.5px #ccc"></div>
<div class="a" style="left:963px;top:103px;width:18.5px;height:19px;background:#0b2f90;border:2.5px solid #fff;box-sizing:border-box"></div>
<div class="a" style="left:955px;top:276px;width:197px;height:8px;background:#484848;"></div>
<div class="tabbar" style="top:284px;height:18px"><div class="tabact" style="left:0px;width:37px;height:18px;background:#555"></div><div class="tabact" style="left:37px;width:30px;height:18px;background:#444"></div></div><span class="t" style="left:961px;top:288px;font-size:11.5px;color:#f0f0f0;font-weight:700;letter-spacing:-0.5px">颜色</span><span class="t" style="left:997px;top:288px;font-size:10px;color:#8a8a8a;letter-spacing:-1px">样式</span><svg class="a" style="left:1143px;top:289px" width="8" height="8" viewBox="0 0 8 8"><path d="M0 0h8v7H0zM1 1v1h2V1zM4 1v1h3V1zM1 3v1h2V3zM4 3v1h3V3zM1 5v1h2V5zM4 5v1h3V5z" fill="#cfcfcf" fill-rule="evenodd"/></svg>
<div class="a" style="left:955px;top:302px;width:197px;height:105px;background:#555;"></div>
<div class="a" style="left:968.5px;top:318px;width:16.5px;height:20px;background:#fff;"></div>
<div class="a" style="left:960.5px;top:312.5px;width:17.5px;height:19px;background:#050a2a;border:2px solid #fff;box-sizing:border-box"></div>
<span class="t" style="left:991.5px;top:315.5px;font-size:10.5px;color:#f0f0f0;font-weight:bold">2</span>
<div class="a" style="left:1004px;top:316px;width:79px;height:7px;background:#000;background:linear-gradient(90deg,#ff4010,#ffa000 12%,#b0d000 30%,#20d040 48%,#10a0e0 68%,#1040ff 88%);border-radius:1px;box-shadow:0 0 0 0.5px #3a3a3a"></div>
<div class="a" style="left:1074px;top:317px;width:8px;height:5px;background:#fff;border-radius:2.5px;box-shadow:0 0 2px 1px rgba(255,255,255,.55)"></div>
<div class="a" style="left:1084.5px;top:315px;width:31.5px;height:17px;background:#4b4b4b;border:1px solid #3d3d3d;box-sizing:border-box"></div>
<div class="a" style="left:1086px;top:320px;width:1px;height:9px;background:#dcdcdc;"></div>
<span class="t" style="left:1092px;top:319px;font-size:9.5px;color:#e8e8e8;letter-spacing:-0.8px;font-weight:500">明度</span>
<span class="t" style="left:991.5px;top:338.0px;font-size:10.5px;color:#f0f0f0;font-weight:bold">2</span>
<div class="a" style="left:1004px;top:338.5px;width:79px;height:7px;background:#000;background:linear-gradient(90deg,#ffb000,#e0c000 18%,#60b030 40%,#20a090 58%,#1090e0 78%,#2060ff);border-radius:1px;box-shadow:0 0 0 0.5px #3a3a3a"></div>
<div class="a" style="left:1074px;top:339.5px;width:8px;height:5px;background:#fff;border-radius:2.5px;box-shadow:0 0 2px 1px rgba(255,255,255,.55)"></div>
<div class="a" style="left:1084.5px;top:337px;width:31.5px;height:17px;background:#4b4b4b;border:1px solid #3d3d3d;box-sizing:border-box"></div>
<div class="a" style="left:1086px;top:342px;width:1px;height:9px;background:#dcdcdc;"></div>
<span class="t" style="left:1092px;top:341px;font-size:9.5px;color:#e8e8e8;letter-spacing:-0.8px;font-weight:500">饱和</span>
<span class="t" style="left:991.5px;top:360.5px;font-size:10.5px;color:#f0f0f0;font-weight:bold">2</span>
<div class="a" style="left:1004px;top:361px;width:79px;height:7px;background:#000;background:linear-gradient(90deg,#ff3040,#e02080 25%,#a030d0 50%,#4020f0 72%,#1010ff);border-radius:1px;box-shadow:0 0 0 0.5px #3a3a3a"></div>
<div class="a" style="left:1074px;top:362px;width:8px;height:5px;background:#fff;border-radius:2.5px;box-shadow:0 0 2px 1px rgba(255,255,255,.55)"></div>
<div class="a" style="left:1084.5px;top:359px;width:31.5px;height:17px;background:#4b4b4b;border:1px solid #3d3d3d;box-sizing:border-box"></div>
<div class="a" style="left:1086px;top:364px;width:1px;height:9px;background:#dcdcdc;"></div>
<span class="t" style="left:1092px;top:363px;font-size:9.5px;color:#e8e8e8;letter-spacing:-0.8px;font-weight:500">色相</span>
<div class="a" style="left:960px;top:386.5px;width:182px;height:13.5px;background:#000;border-radius:0 0 0 9px;background:linear-gradient(to bottom,#fff 0%,rgba(255,255,255,0) 45%,rgba(0,0,0,0) 55%,rgba(0,0,0,.75) 100%),linear-gradient(90deg,#ff0000 0%,#ff8000 8%,#ffff00 17%,#00e000 33%,#00e0e0 48%,#0040ff 62%,#8000ff 72%,#ff00c0 82%,#ff0000 95%,#d00000 100%)"></div>
<div class="a" style="left:955px;top:400px;width:197px;height:7px;background:#484848;"></div>
<div class="tabbar" style="top:407px;height:17px"><div class="tabact" style="left:0px;width:34px;height:17px;background:#555"></div><div class="tabact" style="left:34px;width:24px;height:17px;background:#444"></div></div><span class="t" style="left:961px;top:411px;font-size:11.5px;color:#f0f0f0;font-weight:700;letter-spacing:-0.5px">调整</span><span class="t" style="left:995px;top:411px;font-size:10px;color:#8a8a8a;">样</span><svg class="a" style="left:1143px;top:412px" width="8" height="8" viewBox="0 0 8 8"><path d="M0 0h8v7H0zM1 1v1h2V1zM4 1v1h3V1zM1 3v1h2V3zM4 3v1h3V3zM1 5v1h2V5zM4 5v1h3V5z" fill="#cfcfcf" fill-rule="evenodd"/></svg>
<div class="a" style="left:955px;top:424px;width:197px;height:66px;background:#575757;"></div>
<div class="a" style="left:955px;top:490px;width:197px;height:123px;background:#505050;"></div>
<div class="a" style="left:1140px;top:490px;width:12px;height:123px;background:#484848;"></div>
<span class="t" style="left:987.5px;top:440px;font-size:9.5px;color:#f2f2f2;font-weight:bold;letter-spacing:-0.9px">亮度比</span>
<div class="a" style="left:987.5px;top:450.5px;width:111.5px;height:5px;background:linear-gradient(90deg,rgba(200,200,200,0) 0%,rgba(200,200,200,.25) 30%,#c4c4c4 100%)"></div><svg class="a" style="left:1097px;top:447.0px" width="10" height="12" viewBox="0 0 10 12"><path d="M0 1.500L3 0l7 6-7 6-3-1.500z" fill="#c8c8c8"/></svg>
<span class="t" style="left:987.5px;top:463.5px;font-size:9.5px;color:#f2f2f2;font-weight:bold;letter-spacing:-0.9px">色阶线</span>
<div class="a" style="left:987.5px;top:474px;width:111.5px;height:5px;background:linear-gradient(90deg,rgba(200,200,200,0) 0%,rgba(200,200,200,.25) 30%,#c4c4c4 100%)"></div><svg class="a" style="left:1097px;top:470.5px" width="10" height="12" viewBox="0 0 10 12"><path d="M0 1.500L3 0l7 6-7 6-3-1.500z" fill="#c8c8c8"/></svg>
<div class="a" style="left:1041px;top:481px;width:3px;height:3px;background:#b8b8b8;border-radius:1px"></div>
<span class="t" style="left:987.5px;top:499.5px;font-size:9.5px;color:#f2f2f2;font-weight:bold;letter-spacing:-0.9px">曝光自然</span>
<div class="a" style="left:987.5px;top:508px;width:122.5px;height:5px;background:linear-gradient(90deg,rgba(200,200,200,0) 0%,rgba(200,200,200,.25) 30%,#c4c4c4 100%)"></div>
<span class="t" style="left:987.5px;top:522px;font-size:9.5px;color:#f2f2f2;font-weight:bold;letter-spacing:-0.9px">色</span>
<div class="a" style="left:987.5px;top:531px;width:107.5px;height:5px;background:linear-gradient(90deg,rgba(200,200,200,0) 0%,rgba(200,200,200,.25) 30%,#c4c4c4 100%)"></div><svg class="a" style="left:1093px;top:527.5px" width="10" height="12" viewBox="0 0 10 12"><path d="M0 1.500L3 0l7 6-7 6-3-1.500z" fill="#c8c8c8"/></svg>
<span class="t" style="left:987.5px;top:546px;font-size:9.5px;color:#f2f2f2;font-weight:bold;letter-spacing:-0.9px">通道混合</span>
<div class="a" style="left:987.5px;top:555px;width:122.5px;height:5px;background:linear-gradient(90deg,rgba(200,200,200,0) 0%,rgba(200,200,200,.25) 30%,#c4c4c4 100%)"></div>
<span class="t" style="left:987.5px;top:569.5px;font-size:9.5px;color:#f2f2f2;font-weight:bold;letter-spacing:-0.9px">渐变射</span>
<div class="a" style="left:987.5px;top:578.5px;width:107.5px;height:5px;background:linear-gradient(90deg,rgba(200,200,200,0) 0%,rgba(200,200,200,.25) 30%,#c4c4c4 100%)"></div><svg class="a" style="left:1093px;top:575.0px" width="10" height="12" viewBox="0 0 10 12"><path d="M0 1.500L3 0l7 6-7 6-3-1.500z" fill="#c8c8c8"/></svg>
<span class="t" style="left:987.5px;top:593px;font-size:9.5px;color:#f2f2f2;font-weight:bold;letter-spacing:-0.9px">阈</span>
<div class="a" style="left:987.5px;top:602px;width:116.5px;height:5px;background:linear-gradient(90deg,rgba(200,200,200,0) 0%,rgba(200,200,200,.25) 30%,#c4c4c4 100%)"></div><svg class="a" style="left:1102px;top:598.5px" width="10" height="12" viewBox="0 0 10 12"><path d="M0 1.500L3 0l7 6-7 6-3-1.500z" fill="#c8c8c8"/></svg>
<svg class="a" style="left:955px;top:424px" width="197" height="190" viewBox="0 0 197 190"><g fill="#d4d4d4"><path d="M12 20h4v9h-4zM17 23h5v6h-5z"/><path d="M12 80l3-3 2 1 2-2 2 2v6h-9z"/><path d="M13 124c2-2 4 1 6-1s3 1 3 3-2 5-5 4-5-3-4-6z" fill="#bdbdbd"/><path d="M13 171c2-2 4 1 6-1s3 1 3 3-2 5-5 4-5-3-4-6z" fill="#bdbdbd"/><path d="M174 77h2v3h3l2 3-2 2h2v3h-3v2h-3v-2h-4v-3h2v-3h-2v-2h3z"/><path d="M175 124h3l4 9v3h-12v-3zM175 130v3h3v-3z" fill-rule="evenodd"/></g></svg>
<div class="a" style="left:955px;top:612.5px;width:197px;height:1px;background:#444;"></div>
<div class="a" style="left:955px;top:613.5px;width:197px;height:20px;background:#555;"></div>
<svg class="a" style="left:1050px;top:616px" width="90" height="15" viewBox="0 0 90 15"><g fill="#d4d4d4"><path d="M7 2h5v2h-1l3 7v2H4v-2l3-7zM8 8l-1 3h5l-1-3z" fill-rule="evenodd"/><path d="M26 2h4v3h-2v6h-2zM31 4h3l2 3-2 2 2 4h-3l-2-4v-3h2z"/><path d="M50 3h4l-2 4h2v6h-6V7zM55 2h3v5h2v6h-3V9h-2z"/><path d="M72 2h10v10l-3-2-2 3-2-3-3 2zM75 4v5h4V4z" fill-rule="evenodd"/></g></svg><!--R1-E-->
<!--R2-S--><div class="a" style="left:955px;top:633.5px;width:197px;height:2px;background:#3e3e3e;"></div>
<div class="a" style="left:955px;top:635.5px;width:197px;height:17.5px;background:#3f3f3f;"></div>
<div class="a" style="left:955px;top:635.5px;width:35px;height:17.5px;background:#555;"></div>
<div class="a" style="left:991.5px;top:637px;width:26px;height:16px;background:#4c4c4c;"></div>
<div class="a" style="left:1023px;top:637px;width:25px;height:16px;background:#4c4c4c;"></div>
<span class="t" style="left:961px;top:639px;font-size:11.5px;color:#f0f0f0;font-weight:700;letter-spacing:-0.5px">图层</span>
<span class="t" style="left:996px;top:640px;font-size:9.5px;color:#8c8c8c;letter-spacing:-1.2px">通道</span>
<span class="t" style="left:1027px;top:640px;font-size:9.5px;color:#8c8c8c;letter-spacing:-1.2px">路径</span>
<svg class="a" style="left:1143px;top:641px" width="8" height="8" viewBox="0 0 8 8"><path d="M0 0h8v7H0zM1 1v1h2V1zM4 1v1h3V1zM1 3v1h2V3zM4 3v1h3V3zM1 5v1h2V5zM4 5v1h3V5z" fill="#cfcfcf" fill-rule="evenodd"/></svg>
<div class="a" style="left:955px;top:653px;width:197px;height:78px;background:#555;"></div>
<div class="a" style="left:960px;top:660.5px;width:68px;height:15px;background:#777;background:linear-gradient(#8a8a8a,#686868);border-radius:2px;box-shadow:0 0 0 1px #444"></div>
<span class="t" style="left:963px;top:662.5px;font-size:11.5px;color:#f4f4f4;font-weight:bold;letter-spacing:-0.8px">ρ类型库</span>
<div class="a" style="left:1020px;top:666px;width:3px;height:3px;background:#e0e0e0;border-radius:1.5px"></div>
<svg class="a" style="left:1040px;top:660px" width="112" height="16" viewBox="0 0 112 16"><g fill="#d4d4d4"><path d="M5 2h9v2H11v3h3v6H5V7h3V4H5zM8 9v2h3V9z" fill-rule="evenodd"/><path d="M29 2h9v8h-3v4h-2v-4h-4zM31 4v4h5V4z" fill-rule="evenodd"/><path d="M49 3h6v2h-2v7h2v2h-6v-2h2V5h-2zM57 3h6l-4 9h4v2h-6l4-9h-4z" fill="#bdbdbd"/><path d="M75 13l5-9 2 1-2 4 4-3 1 2-4 3 5 3h-4l-3-2-2 3z" fill="#bdbdbd"/><rect x="104" y="6" width="4" height="4" rx="2"/></g></svg>
<div class="a" style="left:955px;top:680px;width:197px;height:1px;background:#444;"></div>
<div class="a" style="left:960px;top:685.5px;width:90px;height:16.5px;background:#777;background:linear-gradient(#848484,#666);border-radius:2px;box-shadow:0 0 0 1px #444"></div>
<span class="t" style="left:964px;top:688px;font-size:11.5px;color:#f4f4f4;font-weight:500;letter-spacing:-0.8px">正常</span>
<span class="t" style="left:1042px;top:690px;font-size:9px;color:#ddd;">‹</span>
<span class="t" style="left:1061px;top:688px;font-size:11.5px;color:#f0f0f0;font-weight:500;letter-spacing:-0.8px">不透明</span>
<div class="a" style="left:1103px;top:684.5px;width:30.5px;height:18px;background:#3a3a3a;border:1px solid #333;box-sizing:border-box"></div>
<span class="t" style="left:1106px;top:689px;font-size:9.5px;color:#e8e8e8;letter-spacing:-0.6px;font-weight:bold">100%</span>
<div class="a" style="left:1134px;top:684.5px;width:18px;height:18px;background:#6a6a6a;background:linear-gradient(#767676,#606060)"></div>
<div class="a" style="left:1140px;top:691.5px;width:4px;height:4px;background:#ececec;border-radius:2px"></div>
<div class="a" style="left:955px;top:705px;width:197px;height:1px;background:#444;"></div>
<span class="t" style="left:960px;top:712px;font-size:10.5px;color:#ddd;letter-spacing:-0.8px;font-weight:500">锁定</span>
<svg class="a" style="left:980px;top:709px" width="80" height="18" viewBox="0 0 80 18"><g fill="#a8a8a8"><path d="M3 5h9v2H9v2h4v2H5V8h2V7H3zM14 11h6v1h-6zM21 12l6-7 1 1-5 7z"/><path d="M45 13l4-9 2 1-1 3 3-2 1 2-4 3 3 3h-3l-2-2-1 2z" fill="#c8c8c8"/><path d="M63 5h4l3 3v6h-6v-3h-2V8h1zM65 8v3h3V8z" fill="#c8c8c8" fill-rule="evenodd"/></g></svg>
<span class="t" style="left:1076.5px;top:712px;font-size:11px;color:#f0f0f0;font-weight:500;letter-spacing:-0.8px">填充</span>
<div class="a" style="left:1103px;top:709px;width:30.5px;height:18px;background:#3a3a3a;border:1px solid #333;box-sizing:border-box"></div>
<span class="t" style="left:1106px;top:713.5px;font-size:9.5px;color:#e8e8e8;letter-spacing:-0.6px;font-weight:bold">100%</span>
<div class="a" style="left:1134px;top:709px;width:18px;height:18px;background:#6a6a6a;background:linear-gradient(#767676,#606060)"></div>
<div class="a" style="left:1140px;top:716px;width:4px;height:4px;background:#ececec;border-radius:2px"></div>
<div class="a" style="left:955px;top:730.5px;width:186.5px;height:30px;background:#525252;"></div>
<div class="a" style="left:955px;top:729.5px;width:186.5px;height:1px;background:#424242;"></div>
<div class="a" style="left:983px;top:730.5px;width:1px;height:30px;background:#454545;"></div>
<svg class="a" style="left:963px;top:741.0px" width="12" height="9" viewBox="0 0 14 10"><path d="M0 5c2-3.500 4.500-5 7-5s5 1.500 7 5c-2 3.500-4.500 5-7 5S2 8.500 0 5zM7 2.200a2.800 2.800 0 100 5.600 2.800 2.800 0 000-5.600z" fill="#8c8c8c" fill-rule="evenodd"/></svg>
<div class="a" style="left:989px;top:734.0px;width:27px;height:24px;background:#06335c;box-shadow:0 0 0 1px #2a2a2a"></div>
<svg class="a" style="left:995px;top:737.0px" width="15" height="18" viewBox="0 0 15 18" shape-rendering="crispEdges"><path d="M3 1h6v3H6v2h3v3h4v3H9v-2H7v3h6v3H4v-3H1v-4h3V7H1V4h2z" fill="#8ad8fa"/><path d="M6 4h3v2H6zM7 11h2v2H7z" fill="#e8f8ff"/></svg>
<span class="t" style="left:1024px;top:740.5px;font-size:11px;color:#f4f4f4;font-weight:bold;letter-spacing:-0.9px">图标</span>
<div class="a" style="left:955px;top:761px;width:186.5px;height:31px;background:#525252;"></div>
<div class="a" style="left:955px;top:760px;width:186.5px;height:1px;background:#424242;"></div>
<div class="a" style="left:984px;top:761px;width:157px;height:31px;background:#587aa9;"></div>
<div class="a" style="left:983px;top:761px;width:1px;height:31px;background:#454545;"></div>
<svg class="a" style="left:963px;top:771.5px" width="12" height="9" viewBox="0 0 14 10"><path d="M0 5c2-3.500 4.500-5 7-5s5 1.500 7 5c-2 3.500-4.500 5-7 5S2 8.500 0 5zM7 2.200a2.800 2.800 0 100 5.600 2.800 2.800 0 000-5.600z" fill="#bdbdbd" fill-rule="evenodd"/></svg>
<div class="a" style="left:989px;top:764.5px;width:27px;height:24px;background:#fff;background-image:conic-gradient(#e4e4e4 25%,#fff 0 50%,#e4e4e4 0 75%,#fff 0);background-size:5px 5px;box-shadow:0 0 0 1.5px #262626"></div>
<span class="t" style="left:1024px;top:771px;font-size:11px;color:#f4f4f4;font-weight:bold;letter-spacing:-0.9px">齿轮组</span>
<div class="a" style="left:955px;top:792.5px;width:186.5px;height:30.5px;background:#525252;"></div>
<div class="a" style="left:955px;top:791.5px;width:186.5px;height:1px;background:#424242;"></div>
<div class="a" style="left:983px;top:792.5px;width:1px;height:30.5px;background:#454545;"></div>
<svg class="a" style="left:963px;top:803.0px" width="12" height="9" viewBox="0 0 14 10"><path d="M0 5c2-3.500 4.500-5 7-5s5 1.500 7 5c-2 3.500-4.500 5-7 5S2 8.500 0 5zM7 2.200a2.800 2.800 0 100 5.600 2.800 2.800 0 000-5.600z" fill="#5e5e5e" fill-rule="evenodd"/></svg>
<div class="a" style="left:989px;top:796.0px;width:27px;height:24px;background:#fff;background-image:conic-gradient(#e4e4e4 25%,#fff 0 50%,#e4e4e4 0 75%,#fff 0);background-size:5px 5px;box-shadow:0 0 0 1.5px #262626"></div>
<span class="t" style="left:1024px;top:802.5px;font-size:11px;color:#f4f4f4;font-weight:bold;letter-spacing:-0.9px">主背景</span>
<div class="a" style="left:955px;top:823.5px;width:186.5px;height:20.5px;background:#525252;"></div>
<div class="a" style="left:955px;top:822.5px;width:186.5px;height:1px;background:#424242;"></div>
<div class="a" style="left:983px;top:823.5px;width:1px;height:20.5px;background:#454545;"></div>
<svg class="a" style="left:963px;top:833.0px" width="12" height="9" viewBox="0 0 14 10"><path d="M0 5c2-3.500 4.500-5 7-5s5 1.500 7 5c-2 3.500-4.500 5-7 5S2 8.500 0 5zM7 2.200a2.800 2.800 0 100 5.600 2.800 2.800 0 000-5.600z" fill="#5e5e5e" fill-rule="evenodd"/></svg>
<div class="a" style="left:989px;top:827.5px;width:27px;height:17px;background:#fff;background-image:conic-gradient(#e4e4e4 25%,#fff 0 50%,#e4e4e4 0 75%,#fff 0);background-size:5px 5px;box-shadow:0 0 0 1.5px #262626"></div>
<span class="t" style="left:1024px;top:832.5px;font-size:11px;color:#f4f4f4;font-weight:bold;letter-spacing:-0.9px">描边</span>
<svg class="a" style="left:1123px;top:770px" width="12" height="13" viewBox="0 0 12 13"><path d="M1 12l3-9 2-2 2 2 3 9h-2l-1-4H6v4H4V8H3z" fill="#e4e4e4"/></svg>
<div class="a" style="left:1141.5px;top:730.5px;width:10.5px;height:113.5px;background:#4a4a4a;"></div>
<div class="a" style="left:1142px;top:731px;width:10px;height:27px;background:#747474;"></div>
<div class="a" style="left:955px;top:843.5px;width:197px;height:1px;background:#3f3f3f;"></div>
<div class="a" style="left:955px;top:844.5px;width:197px;height:19.5px;background:#555;"></div>
<svg class="a" style="left:985px;top:846px" width="150" height="17" viewBox="0 0 150 17"><g fill="#d4d4d4"><path d="M4 8h6v2H4zM11 3h3v12h-3zM15 3h5v2h-3v10h-2z" fill="#9a9a9a"/><path d="M32 14l3-9 3-3 3 3 4 9h-3l-1-4h-2v4h-2v-4h-1l-1 4z"/><path d="M58 8c0-4 3-6 7-6s6 3 6 6-3 6-7 6-6-3-6-6zM62 8c0 2 1 3 3 3s3-1 3-3-1-3-3-3-3 1-3 3zM64 7h4v2h-4z" fill-rule="evenodd"/><path d="M87 3h8v10h-8zM89 5v6h4V5zM96 11h2v2h-2z" fill-rule="evenodd"/><path d="M112 3h11l2 10h-14zM114 5l1 6h8l-1-6z" fill-rule="evenodd"/><path d="M114 5h8v6h-8z"/><path d="M137 2h2v3h4V2h2v4h-8zM137 7h8v8h-8zM139 9v4h1V9zM142 9v4h1V9z" fill-rule="evenodd"/></g></svg><!--R2-E-->
</body>
</html>
